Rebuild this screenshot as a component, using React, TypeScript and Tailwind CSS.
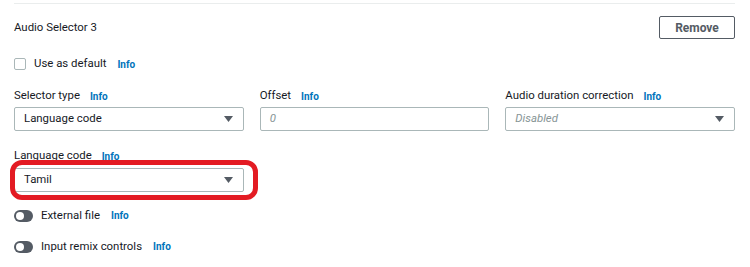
import React from "react"

function Info({ className = "" }: { className?: string }) {
  return <span className={`text-[10px] font-bold text-[#0073bb] ${className}`}>Info</span>
}

function Caret() {
  return (
    <svg width="9" height="6" viewBox="0 0 9 6" className="shrink-0">
      <path d="M0 0h9L4.5 6z" fill="#545b64" />
    </svg>
  )
}

function Select({ value, placeholder = false }: { value: string; placeholder?: boolean }) {
  return (
    <div className="h-[24px] border border-[#aab7b8] rounded-[2px] flex items-center justify-between pl-[9px] pr-[10px] bg-white">
      <span className={placeholder ? "italic text-[#879596]" : "text-[#16191f]"}>{value}</span>
      <Caret />
    </div>
  )
}

function Label({ text }: { text: string }) {
  return (
    <div className="h-[16px] flex items-center gap-[10px] text-[#16191f]">
      <span>{text}</span>
      <Info />
    </div>
  )
}

function Toggle({ label }: { label: string }) {
  return (
    <div className="flex items-center h-[13px]">
      <div className="w-[19px] h-[12px] rounded-full bg-[#545b64] flex items-center pl-[2px]">
        <div className="w-[8px] h-[8px] rounded-full bg-white" />
      </div>
      <span className="ml-[8px] text-[#16191f]">{label}</span>
      <Info className="ml-[11px]" />
    </div>
  )
}

export default function App() {
  return (
    <div className="w-[750px] h-[267px] bg-white relative overflow-hidden text-[11.4px] font-['Roboto',sans-serif]">
      <div className="ml-[14px] w-[721px] pt-[3px]">
        <div className="border-t border-[#eaeded]" />

        <div className="flex items-center justify-between mt-[12px]">
          <span className="text-[#16191f]">Audio Selector 3</span>
          <button className="w-[76px] h-[23px] border border-[#545b64] rounded-[2px] font-bold text-[12px] text-[#545b64]">
            Remove
          </button>
        </div>

        <div className="flex items-center h-[12px] mt-[19px]">
          <div className="w-[12px] h-[12px] border border-[#aab7b8] rounded-[2px] bg-white" />
          <span className="ml-[8px] text-[#16191f]">Use as default</span>
          <Info className="ml-[11px]" />
        </div>

        <div className="grid grid-cols-3 gap-x-[16px] mt-[18px]">
          <div>
            <Label text="Selector type" />
            <div className="mt-[3px]">
              <Select value="Language code" />
            </div>
          </div>
          <div>
            <Label text="Offset" />
            <div className="mt-[3px] h-[24px] border border-[#aab7b8] rounded-[2px] flex items-center pl-[9px]">
              <span className="italic text-[#879596]">0</span>
            </div>
          </div>
          <div>
            <Label text="Audio duration correction" />
            <div className="mt-[3px]">
              <Select value="Disabled" placeholder />
            </div>
          </div>

          <div className="mt-[17px]">
            <Label text="Language code" />
            <div className="mt-[4px]">
              <Select value="Tamil" />
            </div>
          </div>
        </div>

        <div className="mt-[17px] flex flex-col gap-[18px]">
          <Toggle label="External file" />
          <Toggle label="Input remix controls" />
        </div>
      </div>

      <div className="absolute left-[10px] top-[160px] w-[248px] h-[40px] border-[5px] border-[#e31b23] rounded-[12px] pointer-events-none" />
    </div>
  )
}
